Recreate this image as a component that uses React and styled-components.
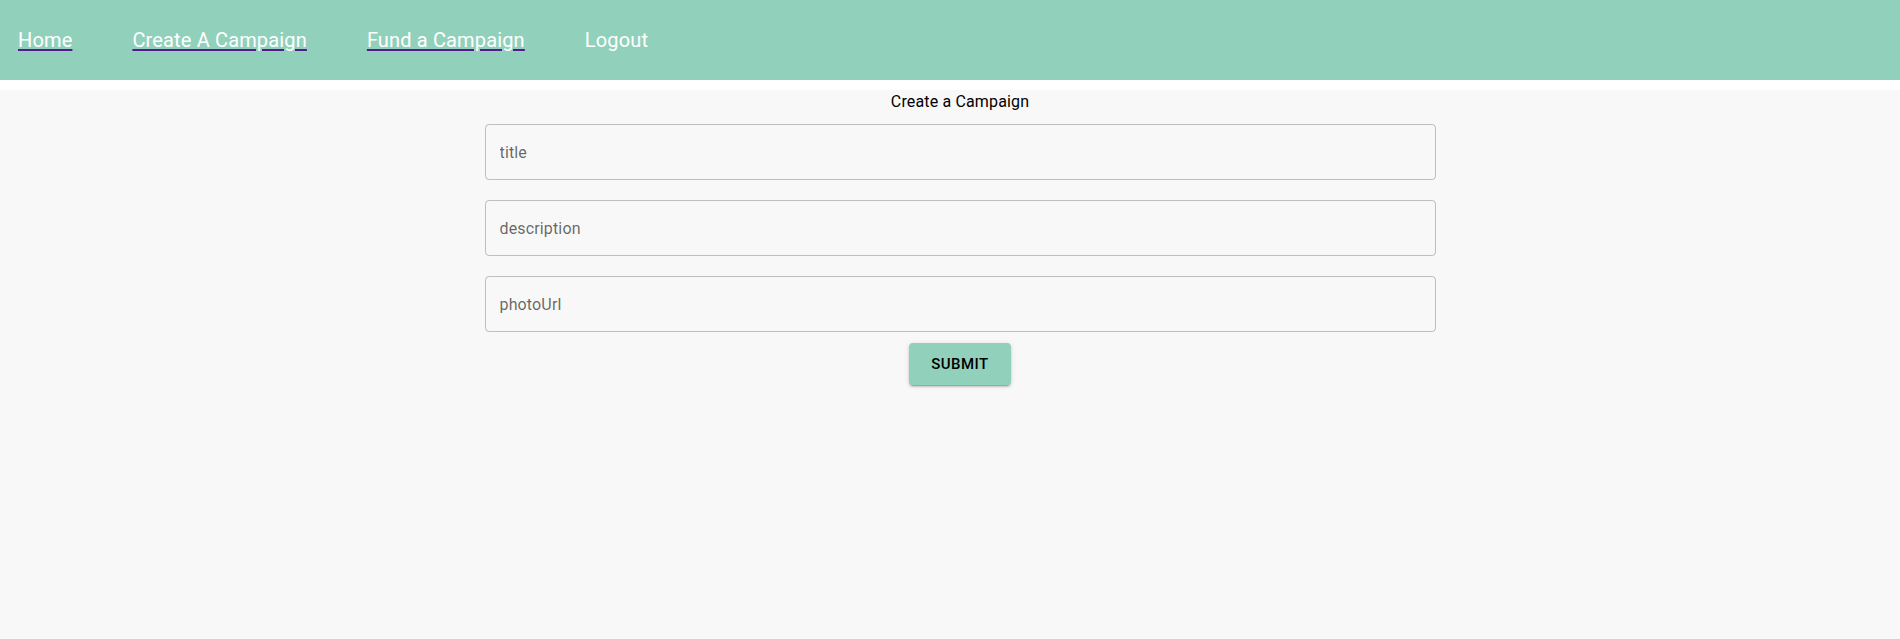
import React from 'react';
import styled, { createGlobalStyle } from 'styled-components';

const GlobalStyle = createGlobalStyle`
   html, body {
      margin: 0;
      padding: 0;
      background-color: #fff;
      font-family: Roboto, "Liberation Sans", Arial, sans-serif;
      overflow: hidden;
   }
`;

const NavbarContainer = styled.nav`
   height: 80px;
   display: flex;
   align-items: center;
   gap: 60px;
   padding-left: 18px;
   background-color: #91d1bc;
   margin-bottom: 10px;
`;

const NavLink = styled.a`
   font-size: 20px;
   line-height: 24px;
   letter-spacing: 0.15px;
   color: #fff;
   text-decoration: ${({ plain }) => (plain ? 'none' : 'underline')};
   text-decoration-color: #551a8b;
   text-underline-offset: 2px;
   text-decoration-thickness: 2px;
   cursor: pointer;
`;

const Page = styled.main`
   background-color: #f8f8f8;
   min-height: calc(100vh - 90px);
   padding-left: 20px;
   display: flex;
   flex-direction: column;
   align-items: center;
`;

const Heading = styled.div`
   font-size: 16px;
   line-height: 24px;
   letter-spacing: 0.15px;
   color: #000;
   margin-bottom: 10px;
`;

const Form = styled.form`
   width: 951px;
   display: flex;
   flex-direction: column;
   align-items: center;
   gap: 20px;
`;

const Field = styled.input`
   box-sizing: border-box;
   width: 100%;
   height: 56px;
   padding: 0 14px;
   border: 1px solid rgba(0, 0, 0, 0.23);
   border-radius: 4px;
   background: transparent;
   font-family: Roboto, "Liberation Sans", Arial, sans-serif;
   font-size: 16px;
   letter-spacing: 0.15px;
   color: rgba(0, 0, 0, 0.87);
   outline: none;
   &::placeholder {
      color: rgba(0, 0, 0, 0.6);
   }
`;

const SubmitButton = styled.button`
   margin-top: -9px;
   height: 42px;
   padding: 8px 22px;
   border: none;
   border-radius: 4px;
   background-color: #91d1bc;
   color: #000;
   font-family: Roboto, "Liberation Sans", Arial, sans-serif;
   font-weight: 500;
   font-size: 15px;
   letter-spacing: 0.46px;
   text-transform: uppercase;
   box-shadow: 0 3px 1px -2px rgba(0,0,0,0.2), 0 2px 2px 0 rgba(0,0,0,0.14), 0 1px 5px 0 rgba(0,0,0,0.12);
   cursor: pointer;
`;

export default function App() {
   return <>
      <GlobalStyle />
      <NavbarContainer>
         <NavLink>Home</NavLink>
         <NavLink>Create A Campaign</NavLink>
         <NavLink>Fund a Campaign</NavLink>
         <NavLink plain>Logout</NavLink>
      </NavbarContainer>
      <Page>
         <Heading>Create a Campaign</Heading>
         <Form onSubmit={e => e.preventDefault()}>
            <Field placeholder="title" />
            <Field placeholder="description" />
            <Field placeholder="photoUrl" />
            <SubmitButton type="submit">Submit</SubmitButton>
         </Form>
      </Page>
   </>
}
